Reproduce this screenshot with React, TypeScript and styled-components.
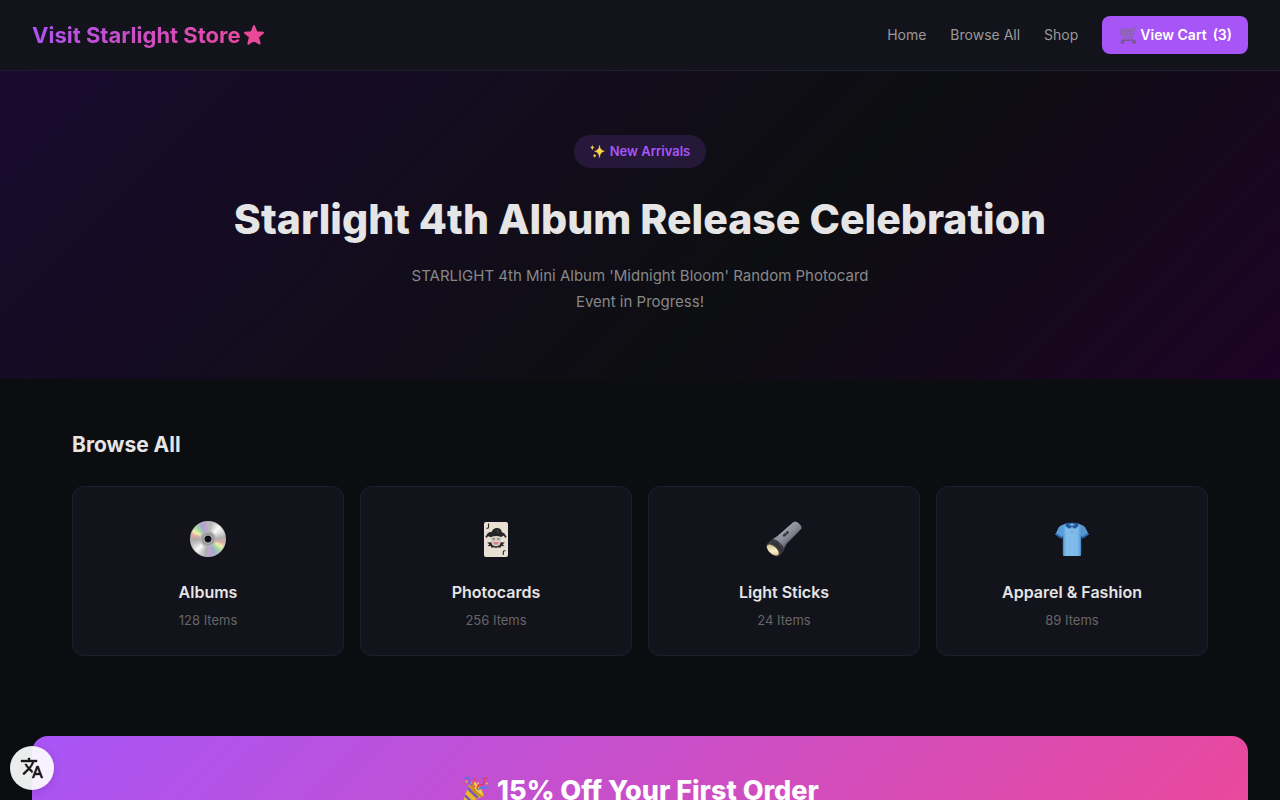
import React from "react";
import styled, { createGlobalStyle } from "styled-components";

const GlobalStyle = createGlobalStyle`
  * { box-sizing: border-box; margin: 0; padding: 0; }
  body {
    background: #0c0d11;
    color: #e5e5e5;
    font-family: Inter, "Liberation Sans", sans-serif;
    font-size: 16px;
    line-height: 26px;
    -webkit-font-smoothing: antialiased;
  }
  svg { display: block; flex: none; }
`;

const Page = styled.div`
  min-height: 100vh;
`;

const Header = styled.header`
  display: flex;
  align-items: center;
  justify-content: space-between;
  padding: 16px 32px;
  background: #13131b;
  border-bottom: 1px solid #1e1e2e;
`;

const Logo = styled.a`
  display: flex;
  align-items: center;
  gap: 2px;
  font-size: 22px;
  line-height: 35px;
  font-weight: 700;
  text-decoration: none;
  color: #ec4899;
`;

const LogoText = styled.span`
  background: linear-gradient(135deg, #a855f7, #ec4899);
  background-clip: text;
  -webkit-background-clip: text;
  color: transparent;
`;

const Nav = styled.nav`
  display: flex;
  align-items: center;
  gap: 24px;
`;

const NavLink = styled.a`
  font-size: 14px;
  line-height: 22px;
  color: #999;
  text-decoration: none;
`;

const CartButton = styled.button`
  display: flex;
  align-items: center;
  gap: 2px;
  padding: 8px 16px;
  border: 0;
  border-radius: 8px;
  background: #a855f7;
  color: #fff;
  font-family: inherit;
  font-size: 14px;
  line-height: 22px;
  font-weight: 600;
  cursor: pointer;
`;

const CartCount = styled.span`
  margin-left: 4px;
`;

const Hero = styled.section`
  display: flex;
  flex-direction: column;
  align-items: center;
  padding: 64px 32px;
  text-align: center;
  background: linear-gradient(135deg, #1a0a2e 0%, #0d0e11 60%, #1d0326 100%);
`;

const Badge = styled.span`
  display: flex;
  align-items: center;
  gap: 4px;
  margin-bottom: 24px;
  padding: 6px 16px;
  border-radius: 20px;
  background: rgba(168, 85, 247, 0.15);
  color: #a855f7;
  font-size: 13px;
  line-height: 21px;
  font-weight: 600;
`;

const HeroTitle = styled.h1`
  margin-bottom: 17px;
  font-size: 41px;
  line-height: 54px;
  font-weight: 800;
`;

const HeroText = styled.p`
  max-width: 480px;
  font-size: 15px;
  color: #888;
`;

const Section = styled.section`
  max-width: 1200px;
  margin: 0 auto;
  padding: 48px 32px;
`;

const SectionTitle = styled.h2`
  margin-bottom: 24px;
  font-size: 21px;
  line-height: 35px;
  font-weight: 700;
`;

const Grid = styled.div`
  display: grid;
  grid-template-columns: repeat(4, 1fr);
  gap: 16px;
`;

const Card = styled.a`
  display: flex;
  flex-direction: column;
  align-items: center;
  padding: 24px;
  border: 1px solid #1e1e2e;
  border-radius: 12px;
  background: #13131b;
  color: inherit;
  text-decoration: none;
`;

const CardIcon = styled.div`
  display: flex;
  align-items: center;
  height: 56px;
  margin-bottom: 12px;
`;

const CardName = styled.h3`
  margin-bottom: 4px;
  font-size: 16px;
  line-height: 26px;
  font-weight: 600;
`;

const CardCount = styled.p`
  font-size: 13px;
  line-height: 22px;
  color: #666;
`;

const Disc = styled.span`
  width: 36px;
  height: 36px;
  border-radius: 50%;
  background:
    radial-gradient(circle, #0d0e14 0 3px, #c4c4c4 4px, #8e8e92 5px, #b4b4b6 7px, rgba(180, 180, 180, 0) 9px),
    conic-gradient(from 0deg, #bcb5c4, #b8b8b8 12deg, #fafafa 42deg, #dedede 62deg, #b0b0b0 85deg,
      #d9aaa4 103deg, #f3efb0 118deg, #9fdc9c 135deg, #a9a4d4 155deg, #c0a4d0 172deg,
      #b0b0b0 190deg, #fafafa 225deg, #c4c4c4 250deg, #b0a8a8 268deg, #dcaaa6 283deg,
      #f3efb0 298deg, #9fdc9c 315deg, #a9a4d4 335deg, #c0a4d0 350deg, #bcb5c4);
  box-shadow: inset 0 0 0 1px rgba(190, 190, 190, 0.7);
`;

const Banner = styled.section`
  display: flex;
  justify-content: center;
  margin: 32px 32px 0;
  padding: 32px;
  border-radius: 16px;
  background: linear-gradient(135deg, #a855f7, #ec4899);
`;

const BannerTitle = styled.h2`
  display: flex;
  align-items: center;
  gap: 8px;
  font-size: 27px;
  line-height: 45px;
  font-weight: 800;
  color: #fff;
`;

const TranslateButton = styled.button`
  position: fixed;
  left: 10px;
  bottom: 10px;
  display: flex;
  align-items: center;
  justify-content: center;
  width: 44px;
  height: 44px;
  border: 0;
  border-radius: 50%;
  background: rgba(255, 255, 255, 0.92);
  color: #1a1a1a;
  box-shadow: 0 2px 8px rgba(0, 0, 0, 0.15);
  cursor: pointer;
`;

const Star = () => (
  <svg width="22" height="22" viewBox="0 0 22 22" aria-hidden="true">
    <path
      d="M11 2 13.5 8.3 20 8.7 15 13 16.6 19.6 11 16 5.4 19.6 7 13 2 8.7 8.5 8.3Z"
      fill="currentColor" stroke="currentColor" strokeWidth="2" strokeLinejoin="round"
    />
  </svg>
);

const Cart = () => (
  <svg width="20" height="20" viewBox="0 0 20 20" fill="none" aria-hidden="true">
    <path d="M1.5 4.5 16 4 14.5 11 4 12Z" fill="#9a69c8" fillOpacity="0.6" />
    <path d="M19 1.7h-2L14 14.5l-9 .7-1.2-1.4 10.7-2.3M1.5 4.5l14.8-.7M1.5 4.5 4 12.3M2.4 7l13.2-.5M3.2 9.5l11.8-.6M5 4.5l1.7 7.3M8.5 4.3l.8 7.2M12.2 4.1l-.3 7" stroke="#7d6795" strokeWidth="0.7" />
    <path d="M4 15.2h11.5" stroke="#6b5878" strokeWidth="1" />
    <circle cx="4.5" cy="17.2" r="1.3" fill="#8b7c98" stroke="#59446b" strokeWidth="0.8" />
    <circle cx="16.2" cy="17" r="1.3" fill="#8b7c98" stroke="#59446b" strokeWidth="0.8" />
  </svg>
);

const Sparkles = () => (
  <svg width="16" height="16" viewBox="0 0 16 16" fill="#fcd34d" aria-hidden="true">
    <path d="M9.5 1.2Q10 6.4 14.5 7.2 10 8 9.5 13.7 9 8 4.5 7.2 9 6.4 9.5 1.2Z" stroke="#f4c34a" strokeWidth="0.4" />
    <path d="M2.3 1Q2.6 3.2 4.5 3.5 2.6 3.8 2.3 6.2 2 3.8.2 3.5 2 3.2 2.3 1Z" />
    <path d="M4.7 9.7Q5 11.4 6.5 11.7 5 12 4.7 13.9 4.4 12 2.9 11.7 4.4 11.4 4.7 9.7Z" />
  </svg>
);

const JokerCard = () => (
  <svg width="36" height="36" viewBox="0 0 36 36" fill="none" aria-hidden="true">
    <rect x="6" y="1" width="24" height="35" rx="2" fill="#e9dfd2" />
    <path d="M10.5 2.5v3.7q0 1-1 1H8.2" stroke="#29272a" strokeWidth="1.1" />
    <path d="M27.5 29.8h-1.2q-1 0-1 1V34" stroke="#29272a" strokeWidth="1.1" />
    <path d="M13 15.5h10v5.2Q22 25 18 25.6 14 25 13 20.7Z" fill="#d3cbc4" />
    <path d="M8.3 15.6Q9 10.8 13.5 11 15.6 6.4 19.6 7q3.8.6 4.2 4.2 3.4.6 4 4.3-2.6-1.5-4.1.5-5.7-2.3-11.4.3-1.5-1.9-4-.7Z" fill="#252426" />
    <path d="m18.8 8.6 1.7 3.2" stroke="#68666a" strokeWidth="0.7" />
    <circle cx="8.6" cy="15.6" r="1.1" fill="#252426" />
    <circle cx="27.4" cy="15.6" r="1.1" fill="#252426" />
    <path d="M14.4 18h2.4M19.2 18h2.4" stroke="#5a555a" strokeWidth="1.2" />
    <path d="M15.3 20.8q2.7 1 5.4 0-.5 3-2.7 3t-2.7-3Z" fill="#e6756d" />
    <path d="m9 21.5 4.2-.3 1.2 3.1L18 25.6l3.6-1.3 1.2-3.1 4.2.3-2.3 1.7 1.8 2-3.3-.3-.6 1.8-3-.5-1.6 1-1.6-1-3 .5-.6-1.8-3.3.3 1.8-2Z" fill="#29272a" />
  </svg>
);

const Flashlight = () => (
  <svg width="36" height="36" viewBox="0 0 36 36" aria-hidden="true">
    <defs>
      <linearGradient id="torchBody" x1="14" y1="9" x2="25" y2="21" gradientUnits="userSpaceOnUse">
        <stop offset="0" stopColor="#8b8e96" />
        <stop offset="0.4" stopColor="#9094a0" />
        <stop offset="0.75" stopColor="#7b7e89" />
        <stop offset="1" stopColor="#50525b" />
      </linearGradient>
      <linearGradient id="torchLens" x1="2" y1="24" x2="12" y2="33" gradientUnits="userSpaceOnUse">
        <stop offset="0" stopColor="#c7b885" />
        <stop offset="0.6" stopColor="#fff3c5" />
        <stop offset="1" stopColor="#d5c28f" />
      </linearGradient>
    </defs>
    <path d="M6 18.5 11.5 15 27.5 1q2.2-1.6 5.5 1.4t2.2 5.6L20.5 23 17 30Z" fill="url(#torchBody)" />
    <path d="m12.5 15 15-13" stroke="#a9acb4" strokeWidth="1" />
    <path d="M.8 23 6.5 17.7Q14.5 19 18.6 29L13.5 34.7Z" fill="#34353a" />
    <path d="m4 20.5 2 2m1-4 3 3m1-1.8 3 3.3m-1 .6 4 1" stroke="#55565b" strokeWidth="0.7" />
    <ellipse cx="7.2" cy="28.8" rx="8.4" ry="4.6" transform="rotate(42 7.2 28.8)" fill="#414147" />
    <ellipse cx="6.8" cy="29" rx="7.2" ry="3.7" transform="rotate(42 6.8 29)" fill="url(#torchLens)" />
    <path d="m18.2 14.4 3.4-3" stroke="#33343c" strokeWidth="2.6" strokeLinecap="round" />
    <path d="m19 13.3 1.8-1.5" stroke="#5b5e68" strokeWidth="1" strokeLinecap="round" />
  </svg>
);

const Shirt = () => (
  <svg width="36" height="36" viewBox="0 0 36 36" fill="none" aria-hidden="true">
    <defs>
      <linearGradient id="shirtCloth" x1="9" y1="0" x2="27" y2="0" gradientUnits="userSpaceOnUse">
        <stop stopColor="#5b9ed7" />
        <stop offset="0.2" stopColor="#80bdeb" />
        <stop offset="0.8" stopColor="#7dbae9" />
        <stop offset="1" stopColor="#5695d0" />
      </linearGradient>
    </defs>
    <path d="M12 2.5 7 4.5Q5 5.5 4.3 7.2L1.3 13.5l6.2 4 1.5-2.3V34q0 1 1 1h16q1 0 1-1V15.2l1.5 2.3 6.2-4-3-6.3Q31 5.5 29 4.5l-5-2Z" fill="url(#shirtCloth)" />
    <path d="m1.6 13 6.3 3.8M34.4 13l-6.3 3.8" stroke="#2a62a8" strokeWidth="1.8" />
    <path d="M9.2 14.5V33M26.8 14.5V33" stroke="#427fb9" strokeWidth="0.6" />
    <path d="M12.4 2.3Q18 .6 23.6 2.3L24.8 4.5 21.5 7.8 18 6.2 14.5 7.8 11.2 4.5Z" fill="#22599c" />
    <path d="M14.6 3Q18 2 21.4 3L18 5.6Z" fill="#6aa8da" />
    <path d="M16.6 7 18 6.2l1.4.8v4.6h-2.8Z" fill="#6dacde" />
    <circle cx="18" cy="9" r="0.6" fill="#d8efff" />
  </svg>
);

const PartyPopper = () => (
  <svg width="28" height="30" viewBox="0 0 28 30" fill="none" aria-hidden="true">
    <path d="M8.5 7 1.2 27.5q-.3 1.5 1.2 1.2L22 20.5Z" fill="#eab52f" />
    <path d="m7.2 10.5-1 3 9.2 9 2.6-1.1ZM4.6 18.2l-1 2.6 5.1 5 2.5-1Z" fill="#7557b8" />
    <ellipse cx="15.3" cy="13.8" rx="9.7" ry="3.8" transform="rotate(44 15.3 13.8)" fill="#c98e2c" />
    <path d="m9.3 7.2 4.2-2.3 7.2 9.6 2 6-5-3.5Z" fill="#f4cc42" />
    <path d="M14 11Q10.5 8.5 12.5 6t1-4" stroke="#ec4169" strokeWidth="1.6" />
    <path d="M3.5 2Q9 1 8.5 5q-.3 2.5 2.5 4" stroke="#4d79d7" strokeWidth="1.5" />
    <path d="M16 13q1-5 4-4.2T23 5t4-2.3" stroke="#e63963" strokeWidth="1.5" />
    <path d="M17 14q3-3 5.5-2.5t5-.6" stroke="#4289df" strokeWidth="1.7" />
    <path d="m1.5 7 2 .6M18 2.5l1.5 1.5M24 18.5l2 .8M22.5 24l1.5 1" stroke="#ed4770" strokeWidth="1.6" />
    <path d="m16.5 6.7 1 1.2M25 7.8l1.6-.5M6 5l-1 1.2" stroke="#f6cd42" strokeWidth="1.5" />
    <path d="m11 1.5.5 1.5M21 1l1 1.5" stroke="#885ed2" strokeWidth="1.4" />
  </svg>
);

const Translate = () => (
  <svg width="24" height="24" viewBox="0 0 24 24" fill="currentColor" stroke="currentColor" strokeWidth="0.4" aria-hidden="true">
    <path d="m12.87 15.07-2.54-2.51.03-.03A17.52 17.52 0 0 0 14.07 6H17V4h-7V2H8v2H1v1.99h11.17C11.5 7.92 10.44 9.75 9 11.35 8.07 10.32 7.3 9.19 6.69 8h-2c.73 1.63 1.73 3.17 2.98 4.56l-5.09 5.02L4 19l5-5 3.11 3.11.76-2.04zM18.5 10h-2L12 22h2l1.12-3h4.75L21 22h2l-4.5-12zm-2.62 7 1.62-4.33L19.12 17h-3.24z" />
  </svg>
);

const categories = [
  { name: "Albums", count: 128, icon: <Disc /> },
  { name: "Photocards", count: 256, icon: <JokerCard /> },
  { name: "Light Sticks", count: 24, icon: <Flashlight /> },
  { name: "Apparel & Fashion", count: 89, icon: <Shirt /> },
];

export default function App() {
  return (
    <Page>
      <GlobalStyle />
      <Header>
        <Logo href="#">
          <LogoText>Visit Starlight Store</LogoText>
          <Star />
        </Logo>
        <Nav>
          <NavLink href="#home">Home</NavLink>
          <NavLink href="#browse">Browse All</NavLink>
          <NavLink href="#shop">Shop</NavLink>
          <CartButton type="button">
            <Cart />
            View Cart <CartCount>(3)</CartCount>
          </CartButton>
        </Nav>
      </Header>
      <main>
        <Hero>
          <Badge>
            <Sparkles />
            New Arrivals
          </Badge>
          <HeroTitle>Starlight 4th Album Release Celebration</HeroTitle>
          <HeroText>
            STARLIGHT 4th Mini Album 'Midnight Bloom' Random Photocard Event in Progress!
          </HeroText>
        </Hero>
        <Section id="browse">
          <SectionTitle>Browse All</SectionTitle>
          <Grid>
            {categories.map((category) => (
              <Card key={category.name} href="#shop">
                <CardIcon>{category.icon}</CardIcon>
                <CardName>{category.name}</CardName>
                <CardCount>{category.count} Items</CardCount>
              </Card>
            ))}
          </Grid>
        </Section>
        <Banner>
          <BannerTitle>
            <PartyPopper />
            15% Off Your First Order
          </BannerTitle>
        </Banner>
      </main>
      <TranslateButton type="button" aria-label="Translate">
        <Translate />
      </TranslateButton>
    </Page>
  );
}
